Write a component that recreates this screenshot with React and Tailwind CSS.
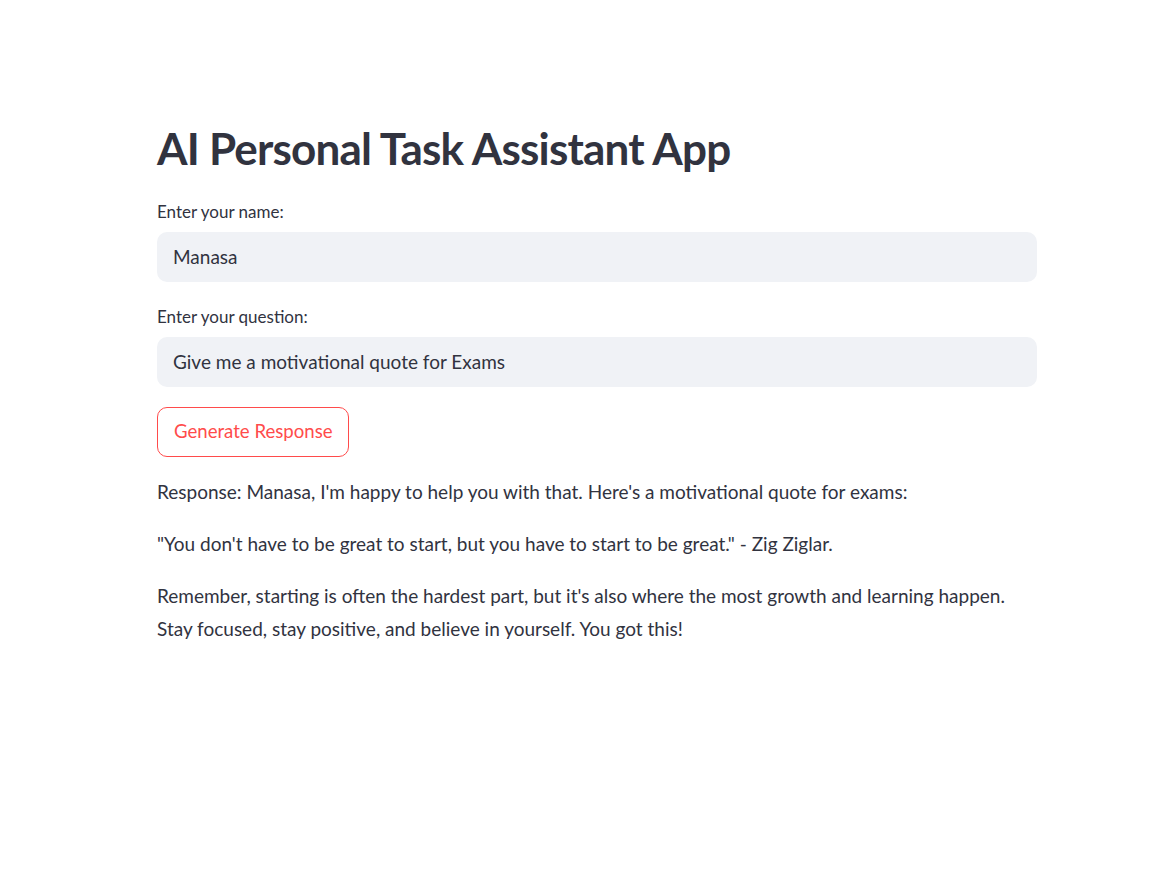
export default function App() {
  return (
    <div className="min-h-screen bg-white text-[#31333f]" style={{ fontFamily: "Lato, 'Noto Sans', sans-serif" }}>
      <div className="w-[880px] ml-[157px] pt-[116px]">
        <h1 className="text-[44px] leading-[64px] font-bold tracking-[-0.8px]">AI Personal Task Assistant App</h1>

        <div className="mt-[22px]">
          <label className="block text-[17px] leading-[20px] mb-[10px]">Enter your name:</label>
          <div className="h-[50px] rounded-[10px] bg-[#f0f2f6] flex items-center px-4 text-[19px]">Manasa</div>
        </div>

        <div className="mt-[25px]">
          <label className="block text-[17px] leading-[20px] mb-[10px]">Enter your question:</label>
          <div className="h-[50px] rounded-[10px] bg-[#f0f2f6] flex items-center px-4 text-[19px]">
            Give me a motivational quote for Exams
          </div>
        </div>

        <button
          type="button"
          className="block mt-[20px] h-[50px] w-[192px] rounded-[10px] border border-[#ff4b4b] bg-white text-[#ff4b4b] text-[18.6px] text-left px-4 whitespace-nowrap"
        >
          Generate Response
        </button>

        <div className="mt-[18px] text-[19px] leading-[33px]">
          <p>Response: Manasa, I'm happy to help you with that. Here's a motivational quote for exams:</p>
          <p className="mt-[19px]">"You don't have to be great to start, but you have to start to be great." - Zig Ziglar.</p>
          <p className="mt-[19px]">
            Remember, starting is often the hardest part, but it's also where the most growth and learning happen.
            Stay focused, stay positive, and believe in yourself. You got this!
          </p>
        </div>
      </div>
    </div>
  );
}
